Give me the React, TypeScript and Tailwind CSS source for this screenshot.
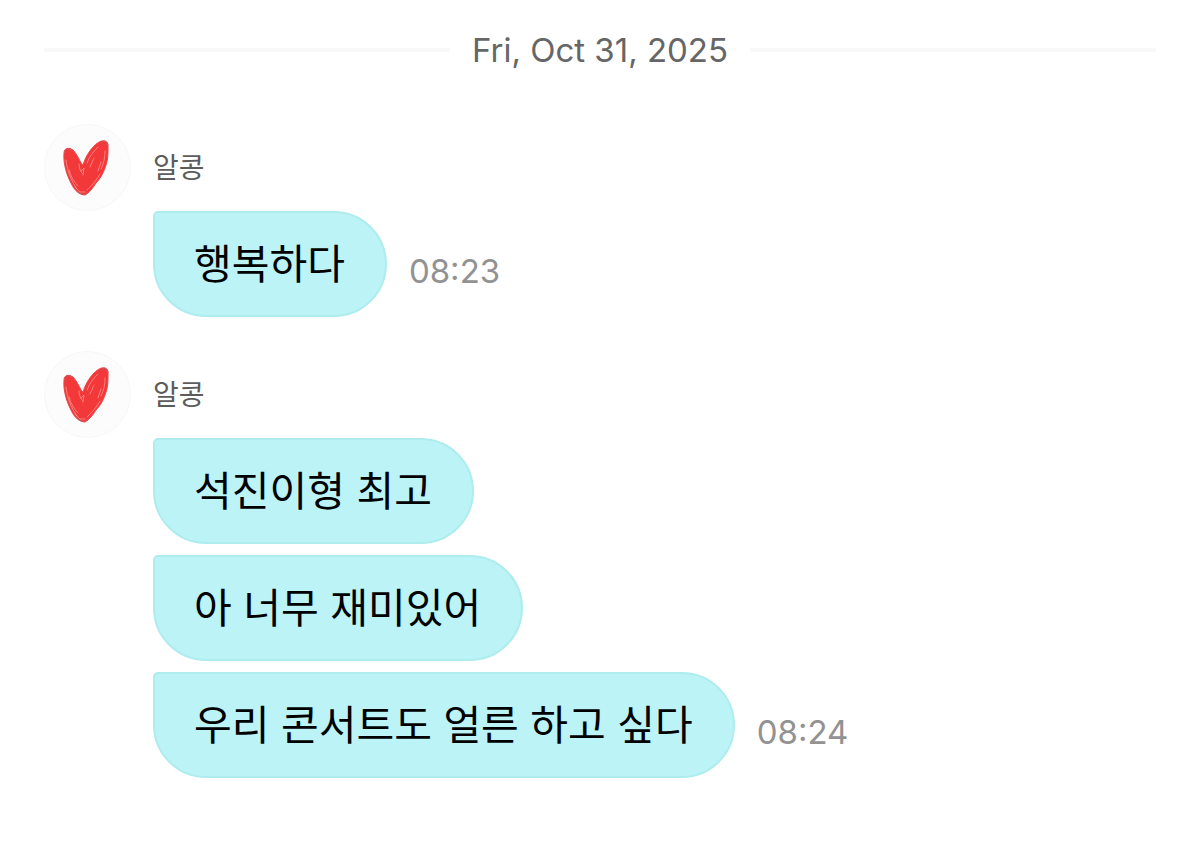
import React from "react";

type MessageGroup = {
  id: number;
  sender: string;
  time: string;
  messages: string[];
};

const groups: MessageGroup[] = [
  { id: 1, sender: "알콩", time: "08:23", messages: ["행복하다"] },
  {
    id: 2,
    sender: "알콩",
    time: "08:24",
    messages: ["석진이형 최고", "아 너무 재미있어", "우리 콘서트도 얼른 하고 싶다"],
  },
];

function DateDivider({ label }: { label: string }) {
  return (
    <div className="flex items-center gap-[22px]">
      <span className="h-1 flex-1 bg-[#f8f8f8]" />
      <time dateTime="2025-10-31" className="text-[33px] leading-10 text-[#666666]">{label}</time>
      <span className="h-1 flex-1 bg-[#f8f8f8]" />
    </div>
  );
}

// Crayon heart on a pale disc
function HeartAvatar() {
  return (
    <svg viewBox="0 0 87 87" className="size-[87px] shrink-0" aria-hidden="true">
      <circle cx="43.5" cy="43.5" r="43" fill="#fcfcfc" stroke="#f7f7f7" />
      <path
        d="M20 29 C20 24 25 23 29 26 C32 29 34 33 36 37 C37 39 38 40 39 41 C41 34 45 27 50 22 C54 18 58 16 61 17 C65 18 64 23 64 28 C64 34 63 39 61 44 C59 50 56 55 52 59 C49 64 45 69 41 71 C36 71 31 67 28 61 C23 52 19 40 20 29 Z"
        fill="#f3383a"
        stroke="#e84a4a"
        strokeWidth="1"
        strokeLinejoin="round"
      />
      <g fill="none" stroke="#ff9f99" strokeWidth="0.7" strokeLinecap="round">
        <path d="M22 36 C23 46 27 57 33 65" />
        <path d="M25 46 C27 53 30 58 34 62" />
        <path d="M35 40 C35 45 37 48 39 50" />
        <path d="M37 47 L40 44 L39 51" />
        <path d="M43 39 C45 33 49 28 54 23" />
        <path d="M46 43 L50 34" />
        <path d="M57 45 C60 39 61 33 61 27" />
        <path d="M54 47 L57 38" />
        <path d="M43 66 C49 61 53 55 56 50" />
        <path d="M31 63 L36 68 L41 68" />
      </g>
      <g fill="none" stroke="#b7626f" strokeWidth="0.8" strokeLinecap="round">
        <path d="M21 29 C20 24 26 23 28 27" />
        <path d="M58 19 C60 16 64 17 64 22 L62 20" />
        <path d="M33 67 C37 71 41 72 44 68" />
      </g>
    </svg>
  );
}

function Bubble({ text }: { text: string }) {
  return (
    <p className="flex h-[106px] items-center rounded-[53px] rounded-tl-[5px] border-2 border-[#aeeced] bg-[#bbf3f6] pr-10 pl-[39px] text-[41px] leading-[60px] text-black">
      {text}
    </p>
  );
}

function ChatGroup({ group }: { group: MessageGroup }) {
  return (
    <article>
      <header className="flex items-center gap-[22px]">
        <HeartAvatar />
        <h2 className="text-[28px] leading-10 text-[#5c5c5c]">{group.sender}</h2>
      </header>
      <div className="flex flex-col gap-[11px] pl-[109px]">
        {group.messages.map((text, i) => (
          <div key={i} className="flex items-end gap-[22px]">
            <Bubble text={text} />
            {i === group.messages.length - 1 && (
              <time className="pb-[26px] text-[33px] leading-10 text-[#929292]">{group.time}</time>
            )}
          </div>
        ))}
      </div>
    </article>
  );
}

export default function App() {
  return (
    <main
      lang="ko"
      className="min-h-screen bg-white px-[44px] pt-[30px] pb-20 font-['Inter','Noto_Sans_CJK_KR',sans-serif]"
    >
      <DateDivider label="Fri, Oct 31, 2025" />
      <div className="mt-[54px] flex flex-col gap-[34px]">
        {groups.map((group) => (
          <ChatGroup key={group.id} group={group} />
        ))}
      </div>
    </main>
  );
}
